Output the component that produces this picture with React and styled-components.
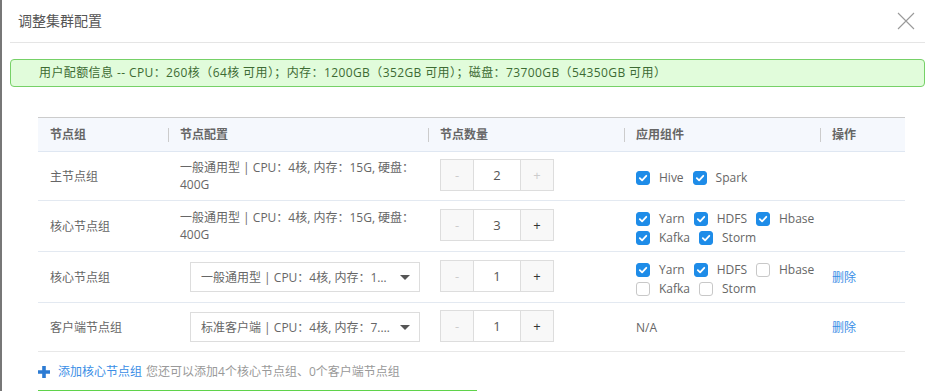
import React from 'react';
import styled, { createGlobalStyle } from 'styled-components';

const GlobalStyle = createGlobalStyle`
    html, body {
        margin: 0;
        padding: 0;
        background: #fff;
    }
    body {
        font-family: "Open Sans", "Noto Sans CJK SC", "Microsoft YaHei", sans-serif;
        font-size: 12px;
        color: #666;
    }
`;

const Page = styled.div`
    display: flex;
    width: 940px;
    height: 391px;
    overflow: hidden;
`;
const Backdrop = styled.div`
    width: 2px;
    flex-shrink: 0;
    background: #777;
`;
const Modal = styled.div`
    flex: 1;
    padding: 0 15px 0 8px;
    background: #fff;
`;
const Header = styled.div`
    display: flex;
    align-items: center;
    justify-content: space-between;
    height: 42px;
    padding: 0 10px 0 8px;
    border-bottom: 1px solid #e5e5e5;

    h2 {
        margin: 0;
        font-size: 14px;
        font-weight: normal;
        color: #555;
        line-height: 16px;
    }
`;
const Close = styled.button`
    width: 18px;
    height: 18px;
    padding: 0;
    border: 0;
    background: none;
    cursor: pointer;
    display: flex;
    align-items: center;
    justify-content: center;
`;
const Notice = styled.div`
    margin-top: 16px;
    height: 26px;
    padding-left: 28px;
    display: flex;
    align-items: center;
    border: 1px solid #76d167;
    border-radius: 4px;
    background: #e1fcdb;
    color: #3d6b33;
    line-height: 14px;
    letter-spacing: 0.4px;
    white-space: nowrap;
`;
const Body = styled.div`
    padding: 30px 20px 0 28px;
`;
const Table = styled.table`
    width: 100%;
    border-collapse: collapse;
    table-layout: fixed;
`;
const Th = styled.th`
    height: 33px;
    padding: 0;
    background: #f5f8fd;
    border-top: 1px solid #ccc;
    border-bottom: 1px solid #dfe7f2;
    text-align: left;
    font-weight: bold;
    color: #666;
`;
const HeadLabel = styled.span`
    display: block;
    line-height: 14px;
    padding-left: ${({ first }) => (first ? '12px' : '11px')};
    border-left: ${({ first }) => (first ? '0' : '1px solid #ccc')};
`;
const Td = styled.td`
    height: ${({ tall }) => (tall ? '50px' : '48px')};
    padding: 0 ${({ tight }) => (tight ? '0' : '12px')} 0 12px;
    border-bottom: 1px solid ${({ last }) => (last ? '#e8e8e8' : '#e3e9f1')};
    vertical-align: middle;
    line-height: 17px;
    color: #666;
`;
const Select = styled.div`
    position: relative;
    margin-left: 10px;
    width: 230px;
    height: 30px;
    box-sizing: border-box;
    border: 1px solid #ddd;
    display: flex;
    align-items: center;
    padding: 0 28px 0 10px;
    background: #fff;

    span {
        overflow: hidden;
        white-space: nowrap;
        text-overflow: ellipsis;
    }
`;
const Caret = styled.i`
    position: absolute;
    right: 9px;
    top: 12px;
    width: 0;
    height: 0;
    border-left: 5px solid transparent;
    border-right: 5px solid transparent;
    border-top: 5px solid #555;
`;
const Stepper = styled.div`
    display: inline-flex;
    height: 32px;
    box-sizing: border-box;
    border: 1px solid #ddd;
    margin-bottom: 2px;
    vertical-align: middle;
`;
const StepBtn = styled.span`
    width: 32px;
    display: flex;
    align-items: center;
    justify-content: center;
    background: #f8f8f8;
    font-size: 13px;
    color: ${({ disabled }) => (disabled ? '#ccc' : '#333')};
`;
const StepValue = styled.span`
    width: 46px;
    display: flex;
    align-items: center;
    justify-content: center;
    background: #fff;
    border-left: 1px solid #ddd;
    border-right: 1px solid #ddd;
    font-size: 13px;
    color: #555;
`;
const Checks = styled.div`
    display: flex;
    flex-wrap: wrap;
    column-gap: 9px;
    row-gap: 5px;
    padding-top: 4px;
`;
const Check = styled.label`
    display: inline-flex;
    align-items: center;
    gap: 9px;
    line-height: 14px;
    color: #666;
`;
const Box = styled.span`
    width: 14px;
    height: 14px;
    box-sizing: border-box;
    border-radius: 3px;
    display: flex;
    align-items: center;
    justify-content: center;
    background: ${({ checked }) => (checked ? '#1e8ce8' : '#fff')};
    border: 1px solid ${({ checked }) => (checked ? '#1e8ce8' : '#c8c8c8')};
`;
const Link = styled.a`
    color: #3a8ee6;
    text-decoration: none;
    cursor: pointer;
`;
const AddRow = styled.div`
    display: flex;
    align-items: center;
    gap: 8px;
    margin-top: 12px;
    line-height: 16px;

    small {
        font-size: 12px;
        color: #999;
        margin-left: 4px;
    }
`;
const Footer = styled.div`
    margin-top: 10px;
    width: 439px;
    height: 20px;
    border-top: 1px solid #5fd34a;
`;

const columns = ['节点组', '节点配置', '节点数量', '应用组件', '操作'];
const widths = [130, 260, 196, 196, 85];

const rows = [
    { group: '主节点组', config: '一般通用型 | CPU：4核, 内存：15G, 硬盘：400G', count: 2, plusOff: true,
      apps: [['Hive', true], ['Spark', true]] },
    { group: '核心节点组', config: '一般通用型 | CPU：4核, 内存：15G, 硬盘：400G', count: 3, tall: true,
      apps: [['Yarn', true], ['HDFS', true], ['Hbase', true], ['Kafka', true], ['Storm', true]] },
    { group: '核心节点组', select: '一般通用型 | CPU：4核, 内存：15G, 硬盘：400G', count: 1, tall: true, removable: true,
      apps: [['Yarn', true], ['HDFS', true], ['Hbase', false], ['Kafka', false], ['Storm', false]] },
    { group: '客户端节点组', select: '标准客户端 | CPU：4核, 内存：7.5G, 硬盘：100G', count: 1, removable: true,
      apps: null },
];

function Tick() {
    return (
        <svg width="10" height="10" viewBox="0 0 10 10">
            <path d="M1.8 5.2 L4.1 7.4 L8.3 2.8" fill="none" stroke="#fff" strokeWidth="1.8" strokeLinecap="round" strokeLinejoin="round" />
        </svg>
    );
}

function App() {
    return (
        <Page>
            <GlobalStyle />
            <Backdrop />
            <Modal>
                <Header>
                    <h2>调整集群配置</h2>
                    <Close aria-label="close">
                        <svg width="18" height="18" viewBox="0 0 18 18">
                            <path d="M1 1 L17 17 M17 1 L1 17" stroke="#9a9a9a" strokeWidth="1.1" />
                        </svg>
                    </Close>
                </Header>
                <Notice>
                    用户配额信息 -- CPU：260核（64核 可用）；内存：1200GB（352GB 可用）；磁盘：73700GB（54350GB 可用）
                </Notice>
                <Body>
                    <Table>
                        <colgroup>
                            {widths.map((w, i) => <col key={i} style={{ width: w }} />)}
                        </colgroup>
                        <thead>
                            <tr>
                                {columns.map((c, i) => (
                                    <Th key={c}><HeadLabel first={i === 0}>{c}</HeadLabel></Th>
                                ))}
                            </tr>
                        </thead>
                        <tbody>
                            {rows.map((r, i) => {
                                const last = i === rows.length - 1;
                                return (
                                    <tr key={i}>
                                        <Td tall={r.tall} last={last}>{r.group}</Td>
                                        <Td tall={r.tall} last={last}>
                                            {r.select ? (
                                                <Select>
                                                    <span>{r.select}</span>
                                                    <Caret />
                                                </Select>
                                            ) : r.config}
                                        </Td>
                                        <Td tall={r.tall} last={last}>
                                            <Stepper>
                                                <StepBtn disabled>-</StepBtn>
                                                <StepValue>{r.count}</StepValue>
                                                <StepBtn disabled={r.plusOff}>+</StepBtn>
                                            </Stepper>
                                        </Td>
                                        <Td tall={r.tall} tight last={last}>
                                            {r.apps ? (
                                                <Checks>
                                                    {r.apps.map(([name, on]) => (
                                                        <Check key={name}>
                                                            <Box checked={on}>{on && <Tick />}</Box>
                                                            {name}
                                                        </Check>
                                                    ))}
                                                </Checks>
                                            ) : 'N/A'}
                                        </Td>
                                        <Td tall={r.tall} last={last}>
                                            {r.removable && <Link>删除</Link>}
                                        </Td>
                                    </tr>
                                );
                            })}
                        </tbody>
                    </Table>
                    <AddRow>
                        <svg width="12" height="12" viewBox="0 0 12 12">
                            <path d="M4.2 0 H7.8 V4.2 H12 V7.8 H7.8 V12 H4.2 V7.8 H0 V4.2 H4.2 Z" fill="#2c7bd3" />
                        </svg>
                        <span>
                            <Link>添加核心节点组</Link>
                            <small>您还可以添加4个核心节点组、0个客户端节点组</small>
                        </span>
                    </AddRow>
                    <Footer />
                </Body>
            </Modal>
        </Page>
    );
}

export default App;
